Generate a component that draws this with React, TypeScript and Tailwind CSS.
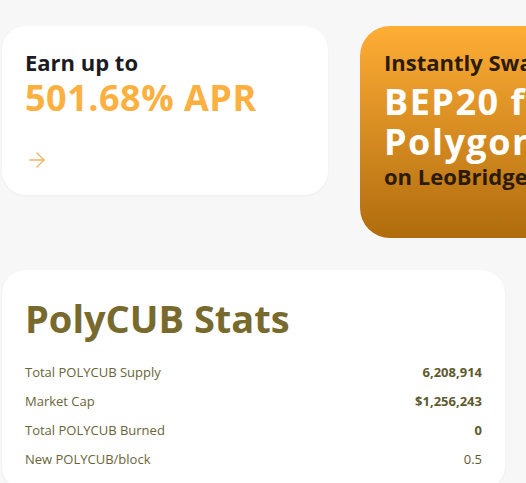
import { ArrowRight } from "lucide-react";

const stats = [
  { label: "Total POLYCUB Supply", value: "6,208,914", bold: true },
  { label: "Market Cap", value: "$1,256,243", bold: true },
  { label: "Total POLYCUB Burned", value: "0", bold: true },
  { label: "New POLYCUB/block", value: "0.5", bold: false },
];

export default function App() {
  return (
    <div
      className="w-[526px] h-[483px] overflow-hidden bg-[#f7f7f7] pt-[26px] pl-[2px]"
      style={{ fontFamily: '"Open Sans", "Noto Sans", sans-serif' }}
    >
      {/* Promo cards */}
      <div className="flex items-start gap-8">
        <div className="w-[326px] h-[169px] shrink-0 rounded-3xl bg-white px-[23px] pt-[22px] shadow-[0_1px_3px_rgba(0,0,0,0.04)]">
          <div className="text-[22px] leading-[28px] font-bold text-[#1c1b22]">Earn up to</div>
          <div className="text-[36px] leading-[44px] font-bold text-[#fbb03f] tracking-[0.5px]">501.68% APR</div>
          <ArrowRight className="mt-[28px] text-[#f2b266]" size={24} strokeWidth={1.4} />
        </div>

        <div className="w-[326px] h-[212px] shrink-0 rounded-[30px] bg-gradient-to-b from-[#ffae35] to-[#b06c0c] px-6 pt-[22px]">
          <div className="text-[22px] leading-[28px] font-bold text-[#2a1b0a] whitespace-nowrap">Instantly Swap</div>
          <div className="mt-[6px] text-[36px] leading-[40px] font-bold text-white whitespace-nowrap tracking-[1.5px]">
            BEP20 for
            <br />
            Polygon
          </div>
          <div className="text-[22px] leading-[28px] font-bold text-[#2a1b0a] whitespace-nowrap">on LeoBridge</div>
        </div>
      </div>

      {/* Stats */}
      <div className="mt-8 w-[503px] rounded-3xl bg-white px-[23px] pt-6 pb-4 shadow-[0_1px_3px_rgba(0,0,0,0.04)]">
        <h2 className="text-[38px] leading-[48px] font-bold text-[#776a2c]">PolyCUB Stats</h2>
        <div className="mt-4 flex flex-col">
          {stats.map((s) => (
            <div key={s.label} className="h-[29px] flex items-center justify-between text-[13px]">
              <span className="font-medium text-[#6a6438]">{s.label}</span>
              <span className={s.bold ? "font-bold text-[#5e5a2f]" : "font-normal text-[#5e5a2f]"}>{s.value}</span>
            </div>
          ))}
        </div>
      </div>
    </div>
  );
}
